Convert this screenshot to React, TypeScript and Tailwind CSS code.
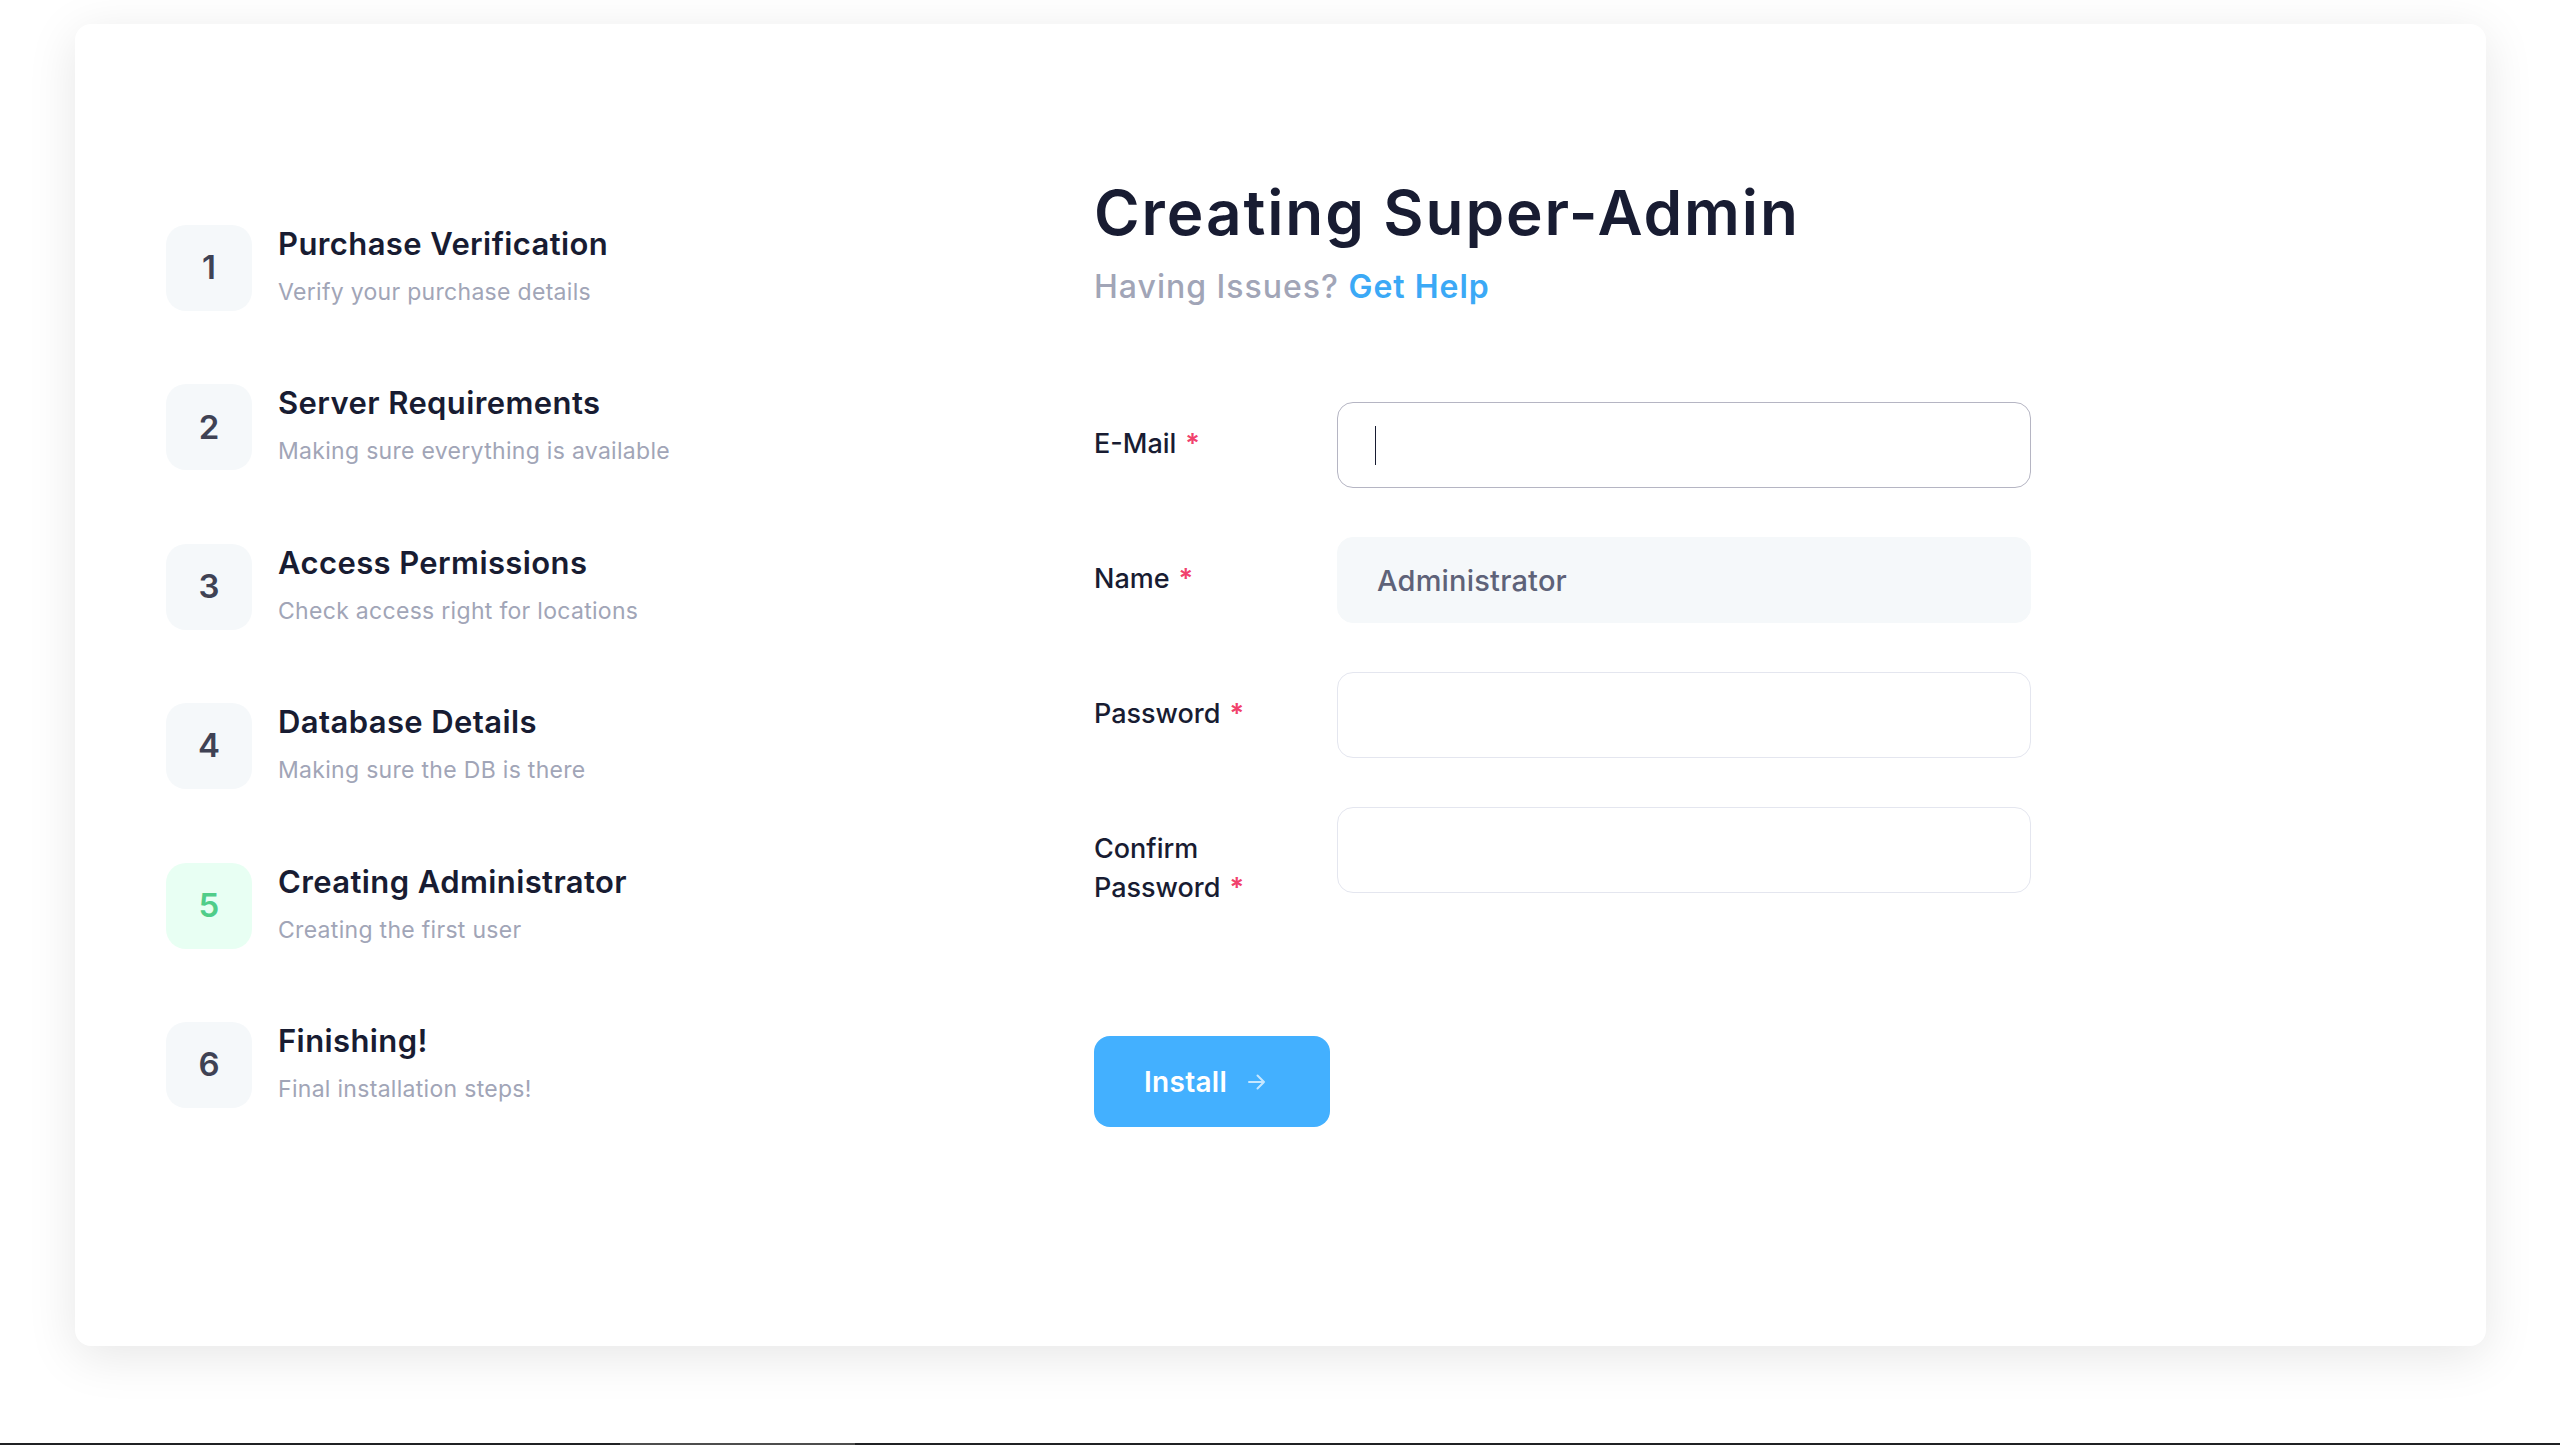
import React from "react";

const steps = [
  { n: "1", title: "Purchase Verification", sub: "Verify your purchase details" },
  { n: "2", title: "Server Requirements", sub: "Making sure everything is available" },
  { n: "3", title: "Access Permissions", sub: "Check access right for locations" },
  { n: "4", title: "Database Details", sub: "Making sure the DB is there" },
  { n: "5", title: "Creating Administrator", sub: "Creating the first user", active: true },
  { n: "6", title: "Finishing!", sub: "Final installation steps!" },
];

function Req() {
  return <span className="ml-[9px] font-semibold text-[#f1416c]">*</span>;
}

function Label({ lines }: { lines: string[] }) {
  return (
    <div className="w-[243px] shrink-0 pt-[22px] text-[27px] leading-[39px] font-medium text-[#181c32]">
      {lines.map((l, i) => (
        <div key={i}>
          {l}
          {i === lines.length - 1 && <Req />}
        </div>
      ))}
    </div>
  );
}

export default function App() {
  return (
    <div className="h-[1445px] bg-white flex flex-col font-['Inter',sans-serif] overflow-hidden">
      <div className="mt-[24px] ml-[75px] w-[2411px] h-[1322px] shrink-0 bg-white rounded-[16px] shadow-[0_10px_50px_rgba(0,0,0,0.1)] flex">
        <div className="pl-[91px] pt-[201px] w-[1019px] shrink-0 flex flex-col gap-[73.4px]">
          {steps.map((s) => (
            <div key={s.n} className="flex items-start">
              <div
                className={
                  s.active
                    ? "w-[86px] h-[86px] rounded-[20px] bg-[#e8fff3] text-[#50cd89] flex items-center justify-center text-[33px] font-semibold"
                    : "w-[86px] h-[86px] rounded-[20px] bg-[#f5f8fa] text-[#3f4254] flex items-center justify-center text-[33px] font-semibold"
                }
              >
                {s.n}
              </div>
              <div className="ml-[26px] pt-[1px]">
                <div className="text-[31px] leading-[36px] tracking-[0.4px] font-semibold text-[#181c32]">{s.title}</div>
                <div className="mt-[15px] text-[23px] leading-[30px] tracking-[0.3px] text-[#a1a5b7]">{s.sub}</div>
              </div>
            </div>
          ))}
        </div>
        <div className="pt-[151px] flex flex-col">
          <h1 className="text-[62px] leading-[75px] tracking-[1.9px] font-semibold text-[#181c32]">Creating Super-Admin</h1>
          <div className="mt-[18px] text-[32px] leading-[38px] tracking-[1px] font-medium text-[#a1a5b7]">
            Having Issues? <a className="text-[#3ba9f6] font-semibold">Get Help</a>
          </div>
          <div className="mt-[96px] flex flex-col gap-[49px]">
            <div className="flex">
              <Label lines={["E-Mail"]} />
              <div className="relative">
                <input className="w-[694px] h-[86px] rounded-[16px] border border-[#b5b5c3] bg-white px-[40px] text-[29px] font-medium text-[#5e6278] outline-none" />
                <span className="absolute left-[38px] top-[24px] w-[1px] h-[39px] bg-[#181c32]" />
              </div>
            </div>
            <div className="flex">
              <Label lines={["Name"]} />
              <input
                defaultValue="Administrator"
                className="w-[694px] h-[86px] rounded-[16px] border border-[#f5f8fa] bg-[#f5f8fa] px-[39px] text-[29px] tracking-[0.2px] font-medium text-[#5e6278] outline-none"
              />
            </div>
            <div className="flex">
              <Label lines={["Password"]} />
              <input
                type="password"
                className="w-[694px] h-[86px] rounded-[16px] border border-[#e4e6ef] bg-white px-[40px] text-[26px] outline-none"
              />
            </div>
            <div className="flex">
              <Label lines={["Confirm", "Password"]} />
              <input
                type="password"
                className="w-[694px] h-[86px] rounded-[16px] border border-[#e4e6ef] bg-white px-[40px] text-[26px] outline-none"
              />
            </div>
          </div>
          <button className="mt-[129px] w-[236px] h-[91px] rounded-[16px] bg-[#43b0ff] flex items-center pl-[50px] text-white text-[28px] tracking-[0.3px] font-semibold">
            <span>Install</span>
            <svg className="ml-[21px]" width="18" height="16" viewBox="0 0 18 16" fill="none">
              <path d="M1 8H16M9.5 1.5L16 8L9.5 14.5" stroke="rgba(255,255,255,0.7)" strokeWidth="2" strokeLinecap="round" strokeLinejoin="round" />
            </svg>
          </button>
        </div>
      </div>
      <div className="flex-1" />
      <div className="h-[2px] shrink-0 bg-[#202124] flex">
        <div className="ml-[620px] w-[235px] bg-[#4d4d4d]" />
      </div>
    </div>
  );
}
